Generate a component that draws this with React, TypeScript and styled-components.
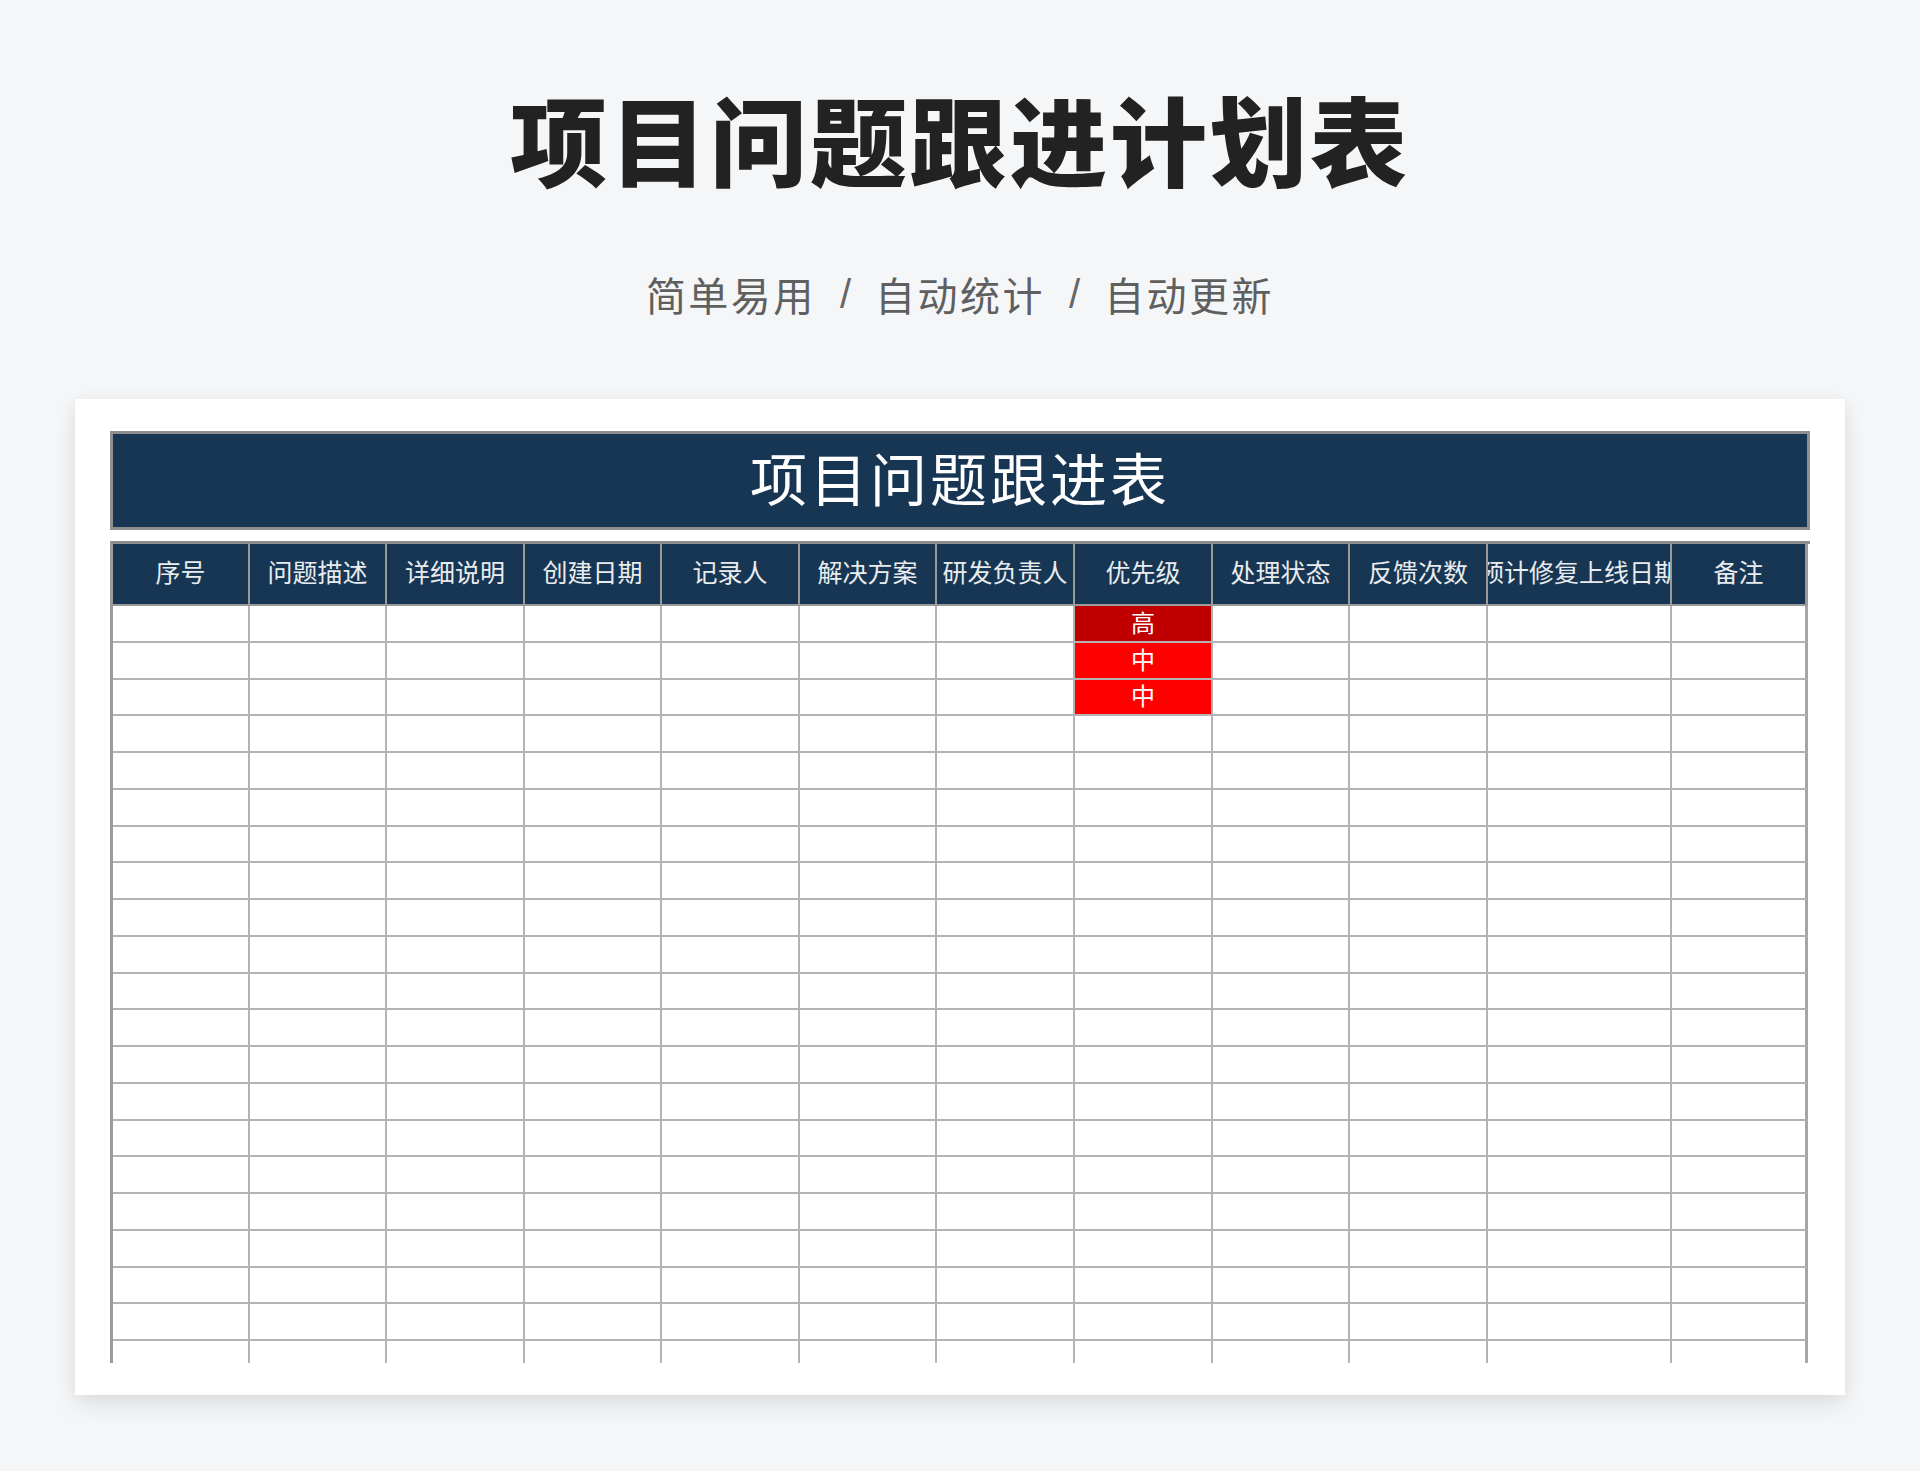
import React from "react";
import styled, { createGlobalStyle } from "styled-components";

const GlobalStyle = createGlobalStyle`
  html, body {
    margin: 0;
    padding: 0;
    background: #f5f6f8;
  }
  body {
    font-family: "Noto Sans CJK SC", "Noto Sans", sans-serif;
  }
`;

const Page = styled.div`
  width: 1920px;
  min-height: 1471px;
  display: flex;
  flex-direction: column;
  align-items: center;
  background: #f5f6f8;
`;

const Title = styled.h1`
  margin: 88px 0 0;
  font-size: 97px;
  line-height: 1;
  font-weight: 900;
  letter-spacing: 3px;
  color: #222222;
`;

const Subtitle = styled.div`
  margin-top: 89px;
  display: flex;
  align-items: center;
  gap: 24px;
  font-size: 40px;
  line-height: 1;
  color: #5f5f5f;
`;

const Segment = styled.span`
  letter-spacing: 2.5px;
`;

const Sep = styled.span`
  font-family: "Liberation Sans", sans-serif;
  font-size: 40px;
  color: #666;
`;

const Card = styled.div`
  margin-top: 85px;
  width: 1770px;
  box-sizing: border-box;
  padding: 32px 35px 32px;
  background: #ffffff;
  box-shadow: 0 10px 22px rgba(0, 0, 0, 0.09), 0 0 14px rgba(0, 0, 0, 0.04);
`;

const SheetTitle = styled.div`
  height: 99px;
  box-sizing: border-box;
  border: 3px solid #8e8e8e;
  background: #173654;
  color: #ffffff;
  font-size: 57px;
  letter-spacing: 3px;
  padding-bottom: 10px;
  display: flex;
  align-items: center;
  justify-content: center;
`;

const Sheet = styled.div<{ $cols: string }>`
  margin-top: 11px;
  display: grid;
  grid-template-columns: ${(p) => p.$cols};
  border-left: 3px solid #9b9b9b;
  border-top: 3px solid #8e8e8e;
`;

const HeaderCell = styled.div<{ $last?: boolean }>`
  height: 62px;
  box-sizing: border-box;
  padding-bottom: 6px;
  background: #173654;
  color: #e9ecef;
  font-size: 25px;
  border-right: ${(p) => (p.$last ? "3px solid #9b9b9b" : "2px solid #9a9a9a")};
  border-bottom: 2px solid #9a9a9a;
  display: flex;
  align-items: center;
  justify-content: center;
  white-space: nowrap;
  overflow: hidden;
`;

const Cell = styled.div<{ $tone?: "high" | "mid"; $last?: boolean; $open?: boolean }>`
  height: ${(p) => (p.$open ? "22px" : "36.75px")};
  box-sizing: border-box;
  padding-bottom: 3px;
  background: ${(p) => (p.$tone === "high" ? "#c00000" : p.$tone === "mid" ? "#ff0000" : "#ffffff")};
  color: #ffffff;
  font-size: 24px;
  line-height: 1;
  border-right: ${(p) => (p.$last ? "3px solid #a6a6a6" : "2px solid #b3b3b3")};
  border-bottom: ${(p) => (p.$open ? "none" : "2px solid #b3b3b3")};
  display: flex;
  align-items: center;
  justify-content: center;
`;

const columns = [
  { name: "序号", w: 137 },
  { name: "问题描述", w: 137 },
  { name: "详细说明", w: 138 },
  { name: "创建日期", w: 137 },
  { name: "记录人", w: 138 },
  { name: "解决方案", w: 137 },
  { name: "研发负责人", w: 138 },
  { name: "优先级", w: 138 },
  { name: "处理状态", w: 137 },
  { name: "反馈次数", w: 138 },
  { name: "预计修复上线日期", w: 184 },
  { name: "备注", w: 136 },
];

const priorities: Record<number, { label: string; tone: "high" | "mid" }> = {
  0: { label: "高", tone: "high" },
  1: { label: "中", tone: "mid" },
  2: { label: "中", tone: "mid" },
};

const ROWS = 20;

export default function App() {
  const colTemplate = columns.map((c) => `${c.w}px`).join(" ");
  const rows = Array.from({ length: ROWS + 1 }, (_, i) => i);
  return (
    <>
      <GlobalStyle />
      <Page>
        <Title>项目问题跟进计划表</Title>
        <Subtitle>
          <Segment>简单易用</Segment>
          <Sep>/</Sep>
          <Segment>自动统计</Segment>
          <Sep>/</Sep>
          <Segment>自动更新</Segment>
        </Subtitle>
        <Card>
          <SheetTitle>项目问题跟进表</SheetTitle>
          <Sheet $cols={colTemplate}>
            {columns.map((c, ci) => (
              <HeaderCell key={c.name} $last={ci === columns.length - 1}>
                {c.name}
              </HeaderCell>
            ))}
            {rows.map((r) =>
              columns.map((c, ci) => {
                const pr = ci === 7 ? priorities[r] : undefined;
                return (
                  <Cell
                    key={`${r}-${ci}`}
                    $tone={pr?.tone}
                    $last={ci === columns.length - 1}
                    $open={r === ROWS}
                  >
                    {pr?.label}
                  </Cell>
                );
              })
            )}
          </Sheet>
        </Card>
      </Page>
    </>
  );
}
